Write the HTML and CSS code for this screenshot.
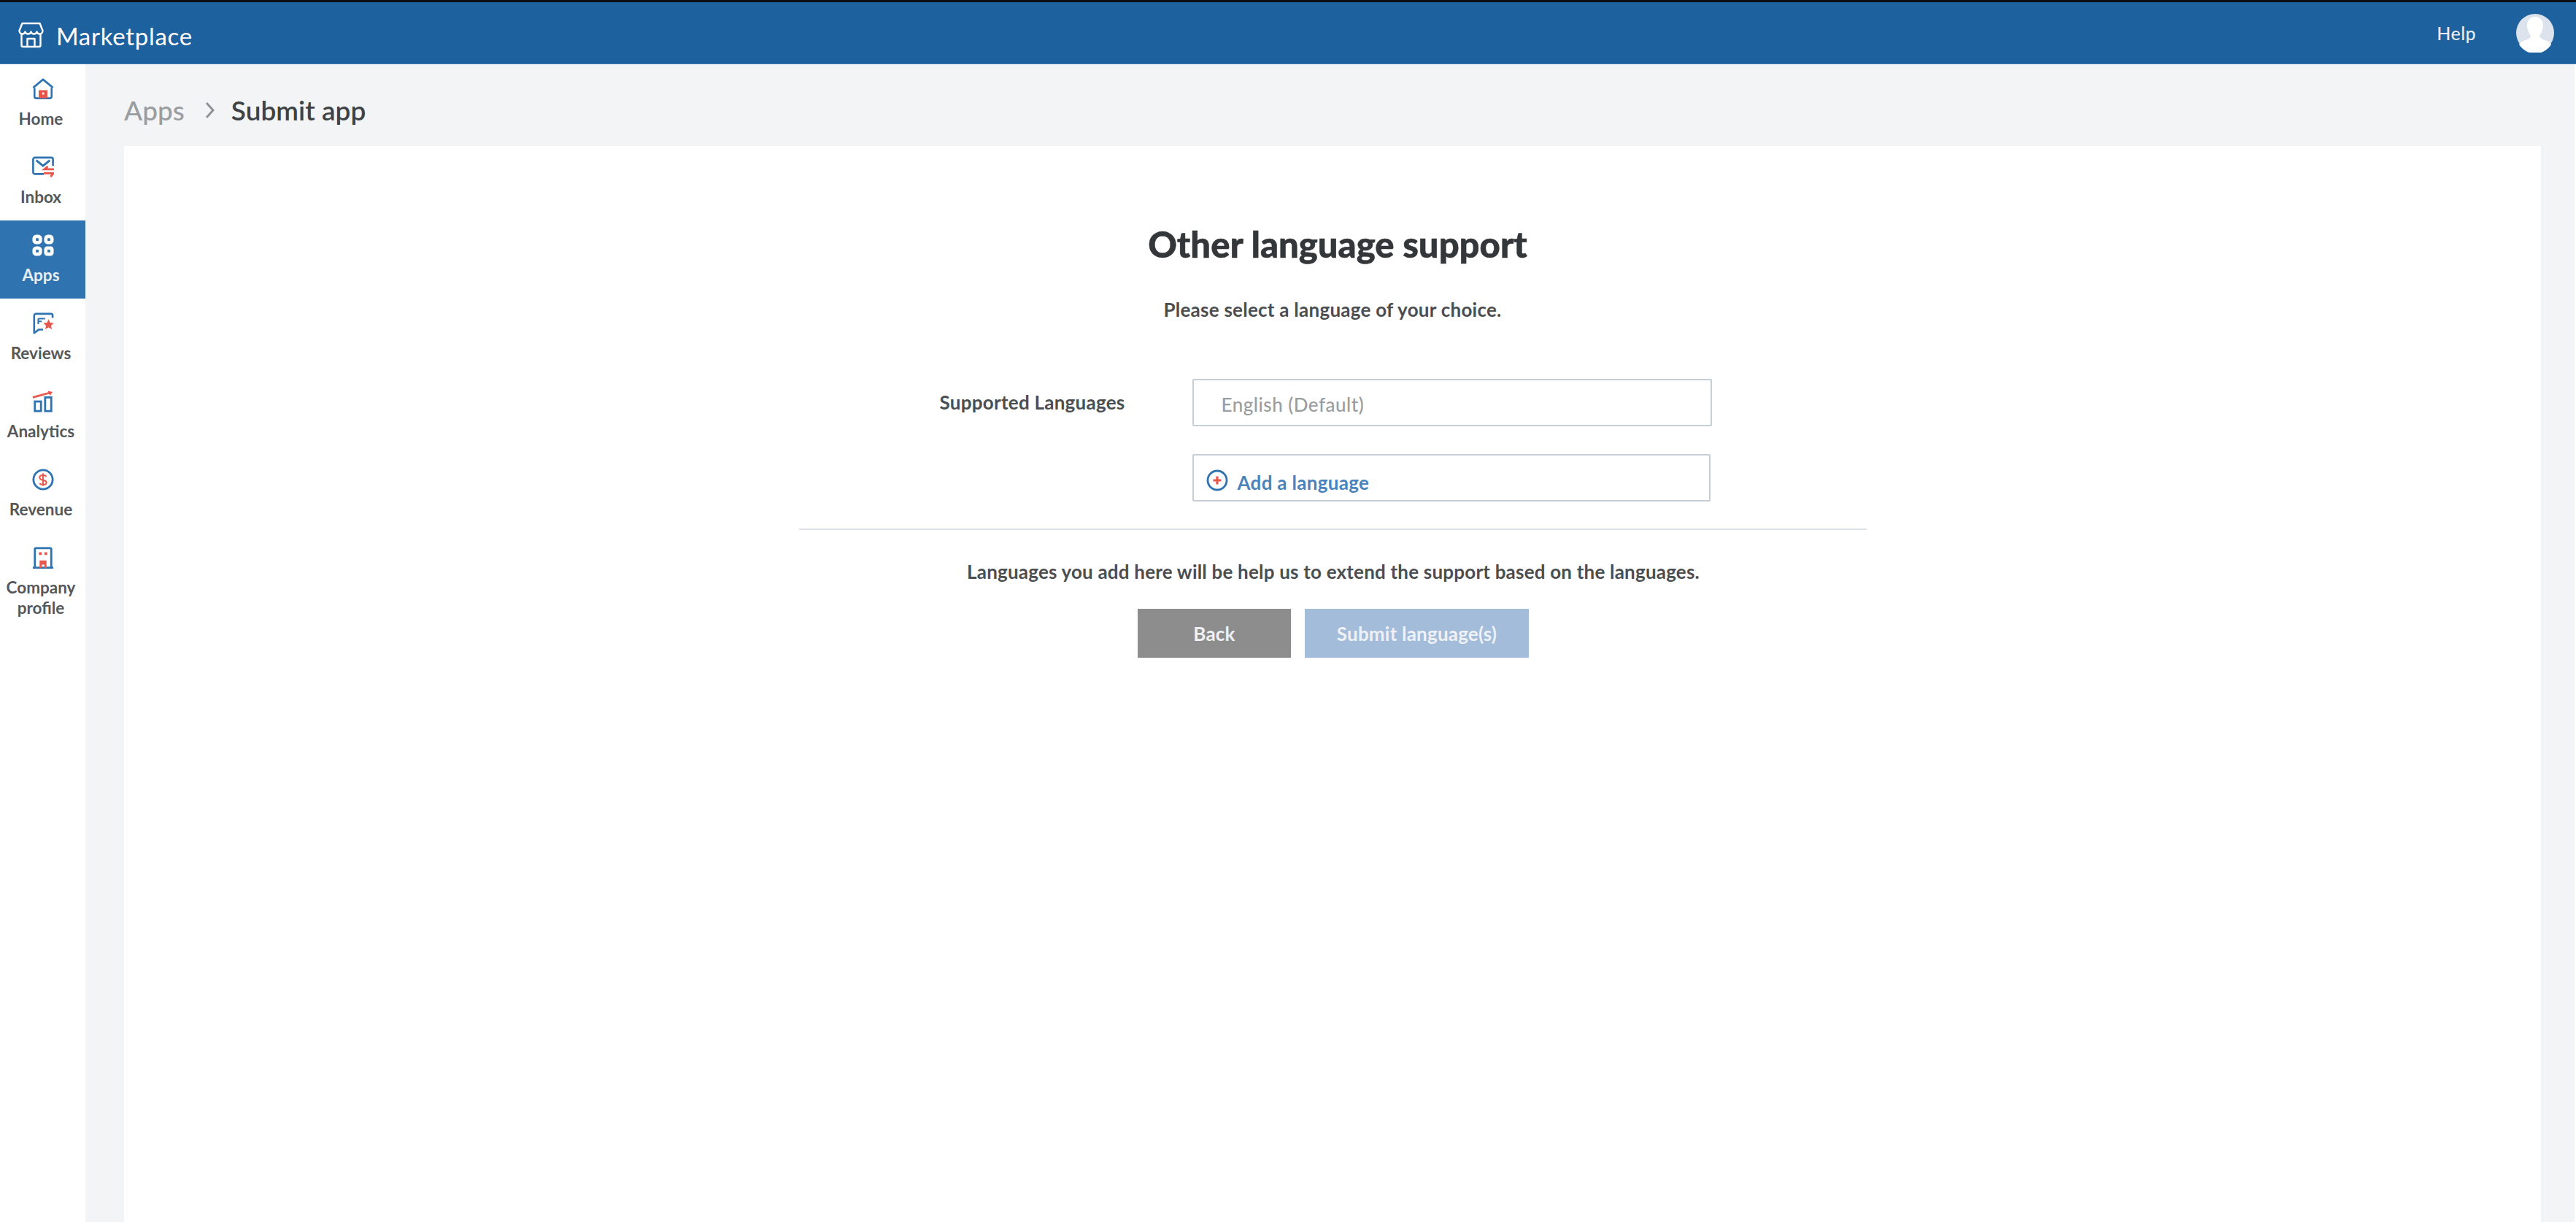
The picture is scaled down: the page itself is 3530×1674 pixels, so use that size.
FILE: index.html
```html
<!DOCTYPE html>
<html lang="en">
<head>
<meta charset="utf-8">
<title>Marketplace - Submit app</title>
<link rel="stylesheet" href="styles.css">
</head>
<body>
<div class="page">
  <header class="topbar">
    <div class="brand">
      <svg class="brand-icon" viewBox="0 0 36 36" fill="none" stroke="#fff" stroke-width="2.4" stroke-linejoin="round" stroke-linecap="round">
        <path d="M6 2h24l4 10c0 3-2 4.500-4 4.500s-3.500-1-4-3c-.5 2-2.500 3-4 3s-3.500-1-4-3c-.5 2-2.500 3-4 3s-3.500-1-4-3c-.5 2-2 3-4 3s-4-1.500-4-4.500z"/>
        <path d="M5 17v15a2 2 0 0 0 2 2h22a2 2 0 0 0 2-2V17"/>
        <path d="M13 34V23h10v11"/>
      </svg>
      <span class="brand-name">Marketplace</span>
    </div>
    <div class="top-actions">
      <span class="help">Help</span>
      <svg class="avatar" viewBox="0 0 52 52">
        <circle cx="26" cy="26" r="26" fill="#dde3ec"/>
        <path d="M26 4c7 0 11 5 11 12 0 6-3 11-5 14 0 3 4 5 10 7 3 1 5 3 6 5a26 26 0 0 1-44 0c1-2 3-4 6-5 6-2 10-4 10-7-2-3-5-8-5-14 0-7 4-12 11-12z" fill="#fff"/>
      </svg>
    </div>
  </header>
  <div class="body">
    <nav class="sidebar">
      <a class="nav-item">
        <svg class="nav-icon" viewBox="0 0 32 32" fill="none" stroke="#2f74b0" stroke-width="2.800">
          <path d="M1.500 14 16 2l14.500 12" stroke-linejoin="round"/>
          <path d="M3.500 14v13a2.500 2.500 0 0 0 2.500 2.500h20a2.500 2.500 0 0 0 2.500-2.500V14"/>
          <path d="M11 28v-9h10v9z" fill="#e8574b" stroke="#e8574b"/>
          <rect x="15" y="21" width="2.500" height="3" fill="#fff" stroke="none"/>
        </svg>
        <span class="nav-label">Home</span>
      </a>
      <a class="nav-item">
        <svg class="nav-icon" viewBox="0 0 32 32" fill="none" stroke="#2f74b0" stroke-width="2.800">
          <path d="M17 26H4a2.500 2.500 0 0 1-2.500-2.500v-19A2.500 2.500 0 0 1 4 2h24a2.500 2.500 0 0 1 2.500 2.500V14"/>
          <path d="M6 6l10 8 10-8" stroke-width="3.200"/>
          <path d="M32 19H18l5-4M17 25h14l-4 5" stroke="#e8574b" stroke-width="3"/>
        </svg>
        <span class="nav-label">Inbox</span>
      </a>
      <a class="nav-item active">
        <svg class="nav-icon" viewBox="0 0 32 32" fill="none" stroke="#fff" stroke-width="5">
          <rect x="3" y="3" width="9" height="9" rx="3"/>
          <rect x="20" y="3" width="9" height="9" rx="3"/>
          <rect x="3" y="20" width="9" height="9" rx="3"/>
          <rect x="20" y="20" width="9" height="9" rx="2"/>
        </svg>
        <span class="nav-label">Apps</span>
      </a>
      <a class="nav-item">
        <svg class="nav-icon" viewBox="0 0 32 32" fill="none" stroke="#2f74b0" stroke-width="2.800">
          <path d="M30 8V4.500A2.500 2.500 0 0 0 27.500 2h-22A2.500 2.500 0 0 0 3 4.500V30l7-5h6" stroke-linejoin="round"/>
          <path d="M9 9h10M9 9v8M9 13h5" stroke-width="2.200"/>
          <path d="M24 10l2.300 5 5.400.6-4 3.600 1.100 5.300-4.800-2.700-4.800 2.700 1.100-5.300-4-3.600 5.400-.6z" fill="#e8574b" stroke="none"/>
        </svg>
        <span class="nav-label">Reviews</span>
      </a>
      <a class="nav-item">
        <svg class="nav-icon" viewBox="0 0 32 32" fill="none">
          <path d="M1 10 27 3" stroke="#e8574b" stroke-width="2.800"/>
          <path d="M23 .5l7 1.500-4 5.500z" fill="#e8574b"/>
          <rect x="4" y="16" width="9" height="14" stroke="#2f74b0" stroke-width="3"/>
          <rect x="19" y="10" width="9" height="20" stroke="#2f74b0" stroke-width="3"/>
        </svg>
        <span class="nav-label">Analytics</span>
      </a>
      <a class="nav-item">
        <svg class="nav-icon" viewBox="0 0 32 32" fill="none">
          <circle cx="16" cy="16" r="14" stroke="#2f74b0" stroke-width="3"/>
          <path d="M21 11.500c-1-1.500-3-2-5-2-3 0-5 1.500-5 3.500 0 5 10 2.500 10 7 0 2-2 3.500-5 3.500-2 0-4-.5-5-2M16 7v18" stroke="#e8574b" stroke-width="2.200"/>
        </svg>
        <span class="nav-label">Revenue</span>
      </a>
      <a class="nav-item">
        <svg class="nav-icon" viewBox="0 0 32 32" fill="none">
          <path d="M4 30V3.500A1.500 1.500 0 0 1 5.500 2h21A1.500 1.500 0 0 1 28 3.500V30M1 30.500h30" stroke="#2f74b0" stroke-width="3"/>
          <rect x="10" y="8" width="4" height="4" fill="#e8574b"/>
          <rect x="18" y="8" width="4" height="4" fill="#e8574b"/>
          <path d="M11 31V20h10v11h-3v-5h-4v5z" fill="#e8574b"/>
        </svg>
        <span class="nav-label">Company<br>profile</span>
      </a>
    </nav>
    <main class="main">
      <div class="crumbs">
        <span class="crumb-parent">Apps</span>
        <svg class="crumb-sep" viewBox="0 0 14 24" fill="none" stroke="#8f9397" stroke-width="3"><path d="M2 2l9 10-9 10"/></svg>
        <span class="crumb-current">Submit app</span>
      </div>
      <section class="card">
        <div class="panel">
          <h1 class="title">Other language support</h1>
          <p class="subtitle">Please select a language of your choice.</p>
          <div class="form-row">
            <label class="form-label">Supported Languages</label>
            <div class="form-fields">
              <div class="field lang-field">English (Default)</div>
              <div class="field add-field">
                <svg class="add-icon" viewBox="0 0 30 30" fill="none">
                  <circle cx="15" cy="15" r="13" stroke="#2f74b0" stroke-width="2.800"/>
                  <path d="M15 9.500v11M9.500 15h11" stroke="#e8574b" stroke-width="3.200"/>
                </svg>
                <span class="add-label">Add a language</span>
              </div>
            </div>
          </div>
          <hr class="divider">
          <p class="note">Languages you add here will be help us to extend the support based on the languages.</p>
          <div class="buttons">
            <button class="btn btn-back">Back</button>
            <button class="btn btn-submit">Submit language(s)</button>
          </div>
        </div>
      </section>
    </main>
  </div>
</div>
</body>
</html>
```

FILE: styles.css
```css
* { box-sizing: border-box; }
html, body { margin: 0; height: 100%; }
body { font-family: Lato, "Liberation Sans", sans-serif; background: #fff; color: #3a3d40; overflow: hidden; }
.page { display: flex; flex-direction: column; height: 1674px; width: 3530px; border-top: 3px solid #0b0f14; }
.topbar { height: 85px; flex: none; background: #1d619f; color: #fff; display: flex; align-items: center; justify-content: space-between; padding: 0 30px 0 24px; border-bottom: 1px solid #3f7db4; }
.brand { display: flex; align-items: center; gap: 16px; padding-top: 6px; }
.brand-icon { width: 37px; height: 36px; }
.brand-name { font-size: 33px; letter-spacing: .7px; padding-top: 1px; }
.top-actions { display: flex; align-items: center; gap: 55px; }
.help { font-size: 25px; color: #e6ecf3; font-weight: 500; letter-spacing: .4px; }
.avatar { width: 52px; height: 54px; }
.body { flex: 1; display: flex; min-height: 0; }
.sidebar { width: 117px; flex: none; background: #fff; display: flex; flex-direction: column; }
.nav-item { height: 107px; display: flex; flex-direction: column; align-items: center; padding-top: 19px; color: #55585b; text-align: center; }
.nav-item.active { background: #2f74b0; color: #e6eef6; }
.nav-icon { width: 30px; height: 30px; flex: none; }
.nav-label { font-size: 22.5px; line-height: 28px; font-weight: 700; margin-top: 12px; padding-right: 5px; white-space: nowrap; }
.main { flex: 1; background: #f3f4f6; margin-right: 2px; padding: 0 46px 0 53px; display: flex; flex-direction: column; min-width: 0; }
.crumbs { height: 112px; flex: none; display: flex; align-items: center; padding-top: 13px; }
.crumb-parent { font-size: 37px; font-weight: 500; color: #9a9da0; }
.crumb-sep { width: 14px; height: 24px; margin: 0 22px 0 28px; }
.crumb-current { font-size: 37px; font-weight: 600; color: #3f4245; }
.card { flex: 1; background: #fff; display: flex; flex-direction: column; align-items: center; }
.panel { width: 1463px; display: flex; flex-direction: column; align-items: center; }
.title { font-size: 49px; font-weight: 900; -webkit-text-stroke: .5px #34373a; color: #34373a; margin: 105px 0 0 14px; line-height: 58px; }
.subtitle { font-size: 26px; letter-spacing: .25px; font-weight: 700; color: #4b4e51; margin: 46px 0 0; line-height: 30px; }
.form-row { align-self: flex-start; display: flex; margin-top: 80px; }
.form-label { width: 539px; flex: none; text-align: right; padding: 17px 92px 0 0; font-size: 26px; letter-spacing: .25px; font-weight: 700; color: #4b4e51; line-height: 30px; }
.form-fields { display: flex; flex-direction: column; gap: 38px; }
.field { width: 712px; height: 65px; border: 2px solid #c6ced7; border-radius: 2px; display: flex; }
.lang-field { padding: 18px 0 0 38px; font-size: 26px; letter-spacing: .5px; color: #9a9da0; font-weight: 500; line-height: 30px; }
.add-field { width: 710px; align-items: flex-end; padding: 0 0 9px 17px; gap: 13px; }
.add-icon { width: 30px; height: 30px; margin-bottom: 3px; }
.add-label { font-size: 26px; letter-spacing: .3px; font-weight: 700; color: #4a83bb; line-height: 30px; }
.divider { width: 100%; height: 2px; border: 0; background: #dde2e8; margin: 37px 0 0; }
.note { font-size: 26px; letter-spacing: .2px; font-weight: 700; color: #4b4e51; margin: 42px 0 0 2px; line-height: 30px; }
.buttons { display: flex; gap: 19px; margin: 36px 0 0 2px; }
.btn { height: 67px; border: 0; font-family: inherit; font-size: 26px; font-weight: 700; letter-spacing: .2px; color: #eef1f5; padding: 0; }
.btn-back { width: 210px; background: #8d8d8d; }
.btn-submit { width: 307px; background: #a3bcd9; }
```
